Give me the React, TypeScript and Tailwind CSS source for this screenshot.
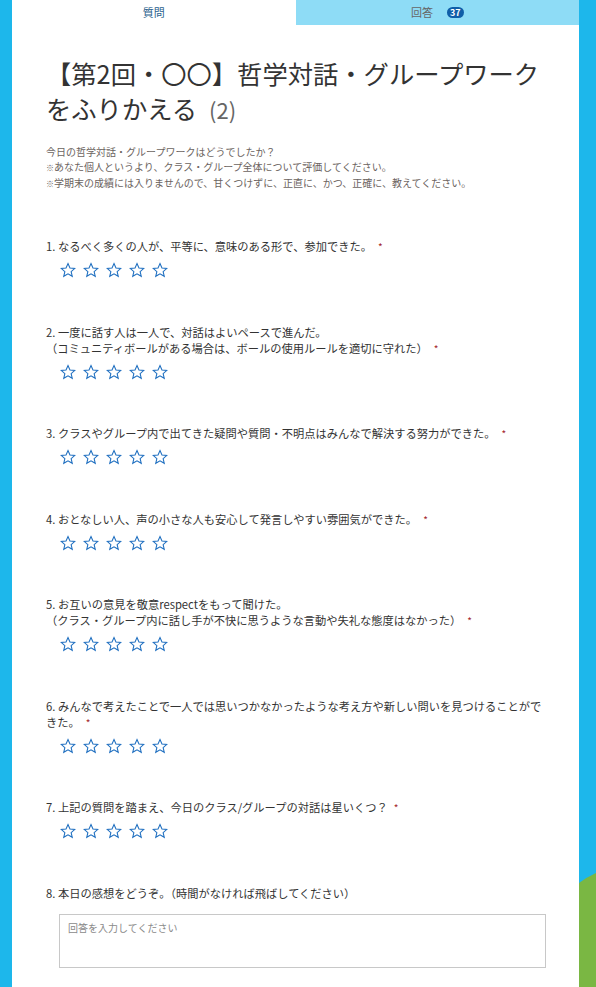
import React from "react";

const Star = () => (
  <svg width="16" height="16" viewBox="0 0 24 24" className="shrink-0">
    <path
      d="M12 2.2l2.95 6.75 7.3.6-5.55 4.8 1.7 7.15L12 17.7l-6.4 3.8 1.7-7.15-5.55-4.8 7.3-.6z"
      fill="none"
      stroke="#1f6fc0"
      strokeWidth="1.6"
      strokeLinejoin="miter"
    />
  </svg>
);

const Stars = () => (
  <div className="flex gap-[7px] pl-[14px] mt-[7px]">
    {[0, 1, 2, 3, 4].map((i) => (
      <Star key={i} />
    ))}
  </div>
);

const Req = () => <span className="text-[#a4262c] ml-[6px] text-[10px]">*</span>;

type Q = { n: number; lines: string[]; req: boolean };

const questions: Q[] = [
  { n: 1, lines: ["なるべく多くの人が、平等に、意味のある形で、参加できた。"], req: true },
  {
    n: 2,
    lines: [
      "一度に話す人は一人で、対話はよいペースで進んだ。",
      "（コミュニティボールがある場合は、ボールの使用ルールを適切に守れた）",
    ],
    req: true,
  },
  { n: 3, lines: ["クラスやグループ内で出てきた疑問や質問・不明点はみんなで解決する努力ができた。"], req: true },
  { n: 4, lines: ["おとなしい人、声の小さな人も安心して発言しやすい雰囲気ができた。"], req: true },
  {
    n: 5,
    lines: [
      "お互いの意見を敬意respectをもって聞けた。",
      "（クラス・グループ内に話し手が不快に思うような言動や失礼な態度はなかった）",
    ],
    req: true,
  },
  {
    n: 6,
    lines: ["みんなで考えたことで一人では思いつかなかったような考え方や新しい問いを見つけることができた。"],
    req: true,
  },
  { n: 7, lines: ["上記の質問を踏まえ、今日のクラス/グループの対話は星いくつ？"], req: true },
];

export default function App() {
  return (
    <div
      className="flex min-h-[987px] bg-[#1db7eb] overflow-hidden"
      style={{ fontFamily: '"Noto Sans CJK JP", "Noto Sans", sans-serif' }}
    >
      <div className="w-[12px] shrink-0" />
      <div className="w-[567px] shrink-0 bg-white flex flex-col">
        <div className="flex h-[25px]">
          <div className="w-1/2 flex items-center justify-center text-[11px] text-[#2b5f8d]">質問</div>
          <div className="w-1/2 bg-[#8edcf6] flex items-center justify-center gap-[14px] text-[11px] text-[#666]">
            <span>回答</span>
            <span className="bg-[#0f5ea8] text-white text-[9px] font-bold leading-none rounded-full px-[3px] h-[11px] flex items-center">
              37
            </span>
          </div>
        </div>
        <div className="pl-[34px] pr-[29px]">
          <h1 className="mt-[31px] text-[25.3px] leading-[35px] text-[#333]">
            【第2回・〇〇】哲学対話・グループワークをふりかえる
            <span className="text-[22px] text-[#666] ml-[12px]">(2)</span>
          </h1>
          <div className="mt-[17px] text-[10px] leading-[15px] text-[#6b6360]">
            <div>今日の哲学対話・グループワークはどうでしたか？</div>
            <div>
              <span className="text-[8px]">※</span>あなた個人というより、クラス・グループ全体について評価してください。
            </div>
            <div>
              <span className="text-[8px]">※</span>学期末の成績には入りませんので、甘くつけずに、正直に、かつ、正確に、教えてください。
            </div>
          </div>
          <div className="mt-[47px] flex flex-col gap-[45.5px]">
            {questions.map((q) => (
              <div key={q.n}>
                <div className="text-[11.25px] leading-[16px] text-[#333]">
                  {q.lines.map((l, i) => (
                    <div key={i}>
                      {i === 0 ? `${q.n}. ` : ""}
                      {l}
                      {i === q.lines.length - 1 && q.req ? <Req /> : null}
                    </div>
                  ))}
                </div>
                <Stars />
              </div>
            ))}
            <div>
              <div className="text-[11.25px] leading-[16px] text-[#333]">
                8. 本日の感想をどうぞ。（時間がなければ飛ばしてください）
              </div>
              <div className="mt-[13px] ml-[13px] w-[487px] h-[54px] border border-[#c8c8c8] px-[8px] pt-[5px] text-[10px] text-[#8a8a8a]">
                回答を入力してください
              </div>
            </div>
          </div>
          <div className="h-[40px]" />
        </div>
      </div>
      <div className="relative w-[17px] shrink-0">
        <svg className="absolute left-0 top-[873px]" width="17" height="200" viewBox="0 0 17 200">
          <path d="M0 10 Q8 4 17 0 V200 H0Z" fill="#7ab743" />
        </svg>
      </div>
    </div>
  );
}
